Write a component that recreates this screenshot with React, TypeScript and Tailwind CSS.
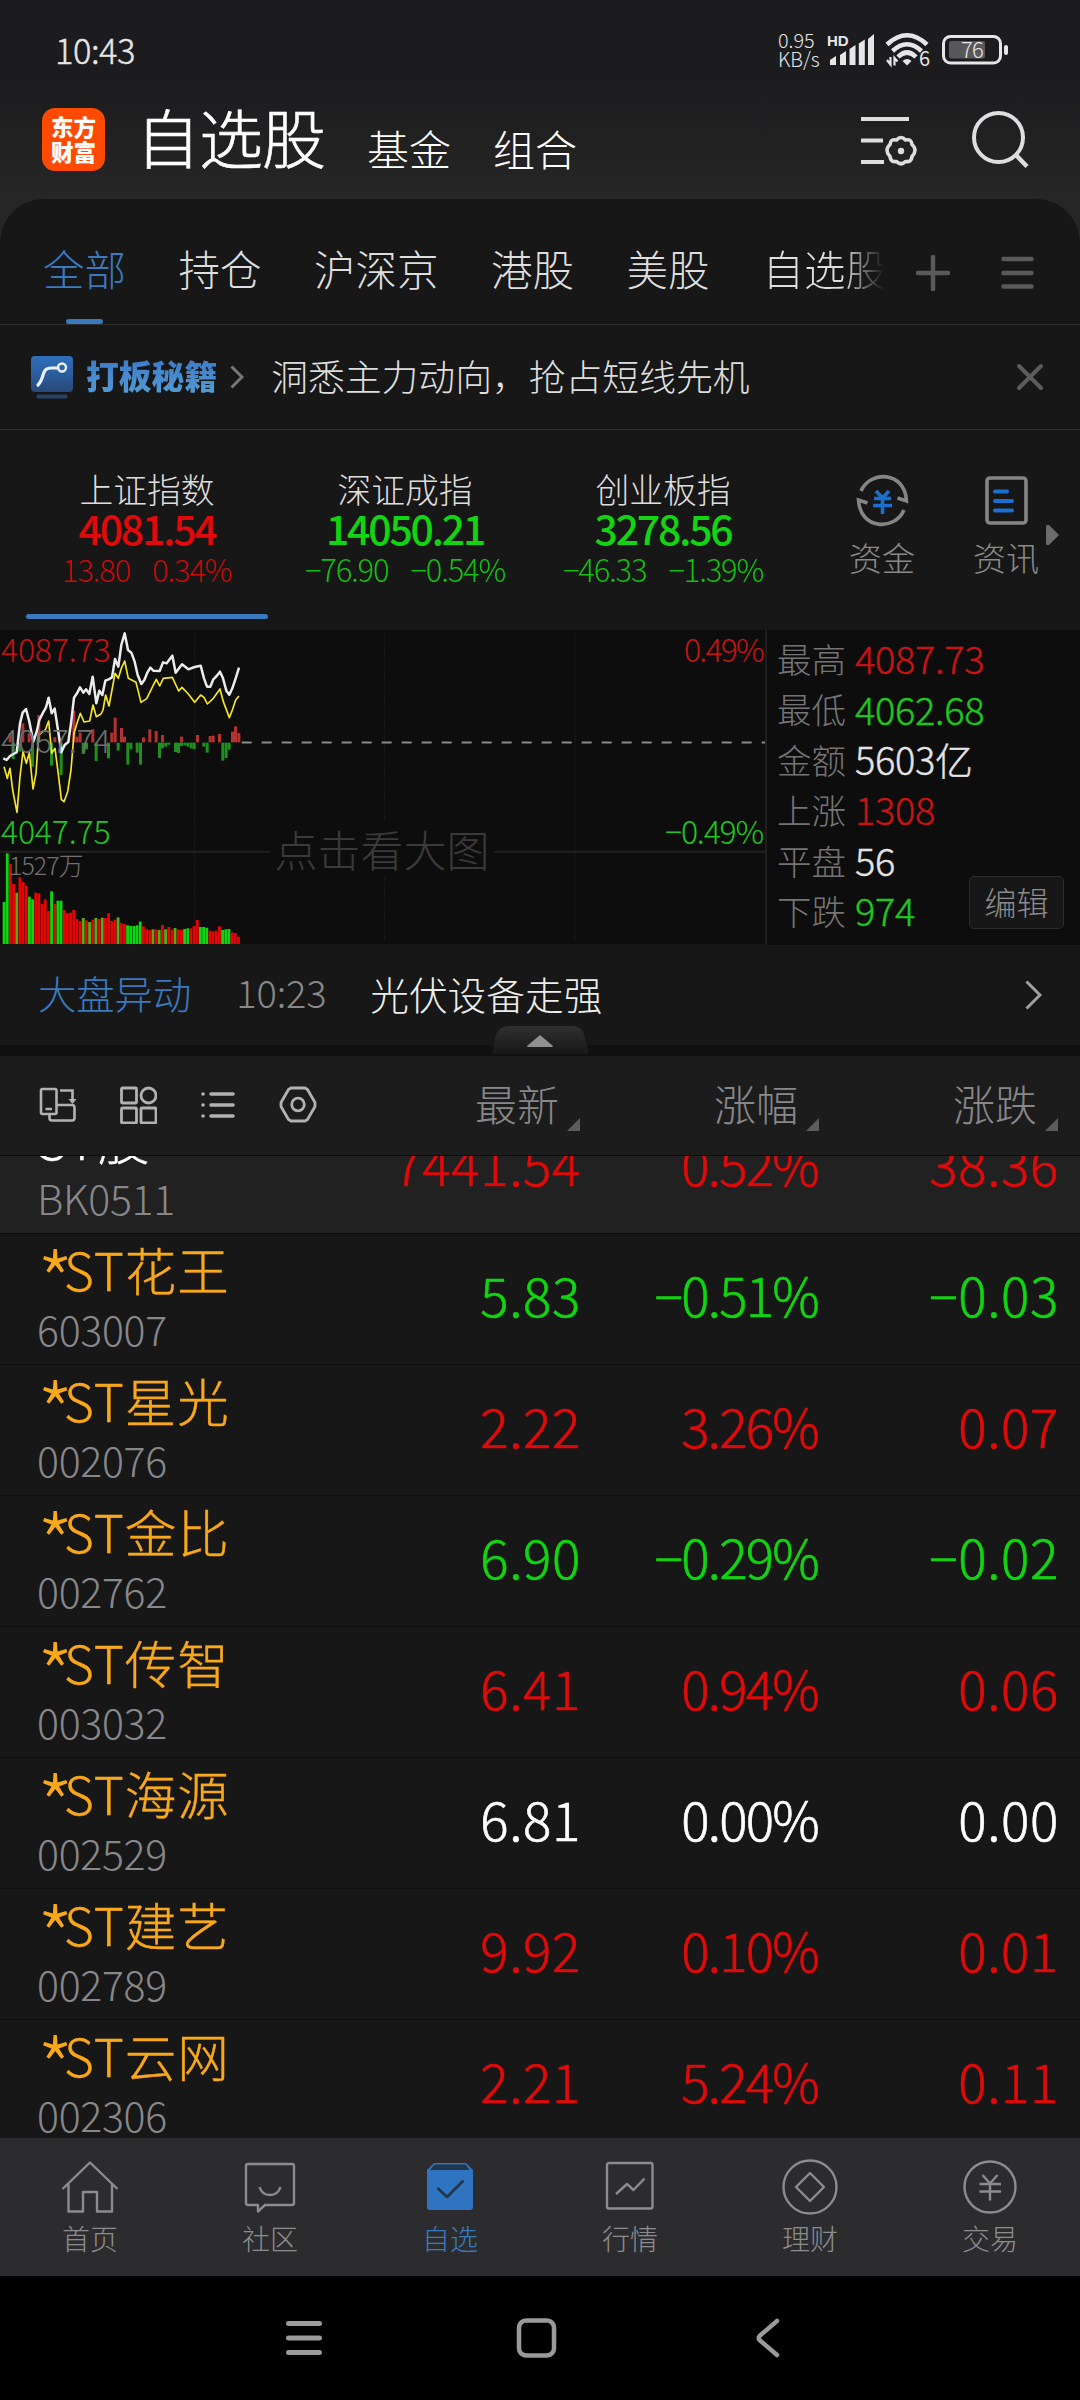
import { ReactNode } from "react";
import clsx from "clsx";

type Trend = "up" | "down" | "flat";

const trendColor: Record<Trend, string> = {
  up: "text-[#e00a0a]",
  down: "text-[#12d412]",
  flat: "text-white",
};

const tabs = ["持仓", "沪深京", "港股", "美股"];

const indices: { name: string; value: string; change: string; percent: string; trend: Trend }[] = [
  { name: "上证指数", value: "4081.54", change: "13.80", percent: "0.34%", trend: "up" },
  { name: "深证成指", value: "14050.21", change: "−76.90", percent: "−0.54%", trend: "down" },
  { name: "创业板指", value: "3278.56", change: "−46.33", percent: "−1.39%", trend: "down" },
];

const summary: { label: string; value: string; trend: Trend }[] = [
  { label: "最高", value: "4087.73", trend: "up" },
  { label: "最低", value: "4062.68", trend: "down" },
  { label: "金额", value: "5603亿", trend: "flat" },
  { label: "上涨", value: "1308", trend: "up" },
  { label: "平盘", value: "56", trend: "flat" },
  { label: "下跌", value: "974", trend: "down" },
];

type Stock = { name: string; code: string; price: string; percent: string; change: string; trend: Trend; starred?: boolean };

const board: Stock = { name: "ST股", code: "BK0511", price: "7441.54", percent: "0.52%", change: "38.36", trend: "up" };

const stocks: Stock[] = [
  { name: "ST花王", code: "603007", price: "5.83", percent: "−0.51%", change: "−0.03", trend: "down", starred: true },
  { name: "ST星光", code: "002076", price: "2.22", percent: "3.26%", change: "0.07", trend: "up", starred: true },
  { name: "ST金比", code: "002762", price: "6.90", percent: "−0.29%", change: "−0.02", trend: "down", starred: true },
  { name: "ST传智", code: "003032", price: "6.41", percent: "0.94%", change: "0.06", trend: "up", starred: true },
  { name: "ST海源", code: "002529", price: "6.81", percent: "0.00%", change: "0.00", trend: "flat", starred: true },
  { name: "ST建艺", code: "002789", price: "9.92", percent: "0.10%", change: "0.01", trend: "up", starred: true },
  { name: "ST云网", code: "002306", price: "2.21", percent: "5.24%", change: "0.11", trend: "up", starred: true },
];

// Intraday chart, all in thirds of a pixel
const priceLine =
  "10,415 20,420 30,408 40,402 50,397 60,310 68,278 78,267 88,305 100,365 110,335 118,300 128,280 138,262 146,233 155,280 164,266 174,330 184,397 194,375 205,366 213,310 222,233 231,220 240,202 250,218 258,208 268,222 278,170 289,250 298,212 307,225 316,182 326,178 336,172 345,117 355,140 364,75 374,40 384,90 394,98 404,125 413,165 424,192 433,180 442,158 451,143 460,152 479,153 489,127 500,130 517,107 527,158 546,133 565,148 584,141 602,137 612,175 621,200 631,200 640,178 650,168 660,155 669,175 679,212 688,224 697,205 707,175 717,143";
const averageLine =
  "12,440 22,475 30,445 38,510 51,577 60,470 69,395 79,430 88,398 99,507 108,460 116,345 126,337 136,330 146,303 155,400 165,385 174,455 184,538 192,545 203,515 213,450 222,340 231,310 241,280 252,306 269,303 279,255 289,290 303,282 309,270 317,225 327,258 336,210 345,160 355,175 364,145 374,123 385,175 408,187 415,215 423,247 440,236 452,212 460,195 469,178 479,198 490,175 517,172 536,213 546,202 565,222 584,247 602,225 612,232 622,252 640,235 660,207 670,245 688,293 697,270 707,240 717,228";
const upTicks = [
  [31, 340], [69, 310], [88, 340], [117, 285], [165, 352], [222, 272], [232, 350], [241, 338], [279, 328], [336, 338],
  [346, 293], [365, 324], [374, 350], [431, 352], [450, 328], [469, 333], [488, 345], [545, 350], [593, 345], [631, 348],
  [640, 347], [659, 342], [698, 335], [707, 319], [717, 339],
];
const downTicks = [
  [40, 417], [60, 395], [98, 440], [155, 437], [184, 465], [250, 402], [260, 388], [289, 423], [326, 415], [355, 392],
  [384, 434], [393, 388], [412, 398], [422, 434], [479, 414], [488, 385], [498, 380], [507, 374], [527, 396], [536, 399],
  [545, 378], [555, 376], [564, 380], [574, 385], [583, 388], [612, 380], [622, 398], [669, 422], [679, 414], [688, 389],
];
const volume =
  "g846 g700 r732 r792 m818 r772 r786 r798 g830 g838 r818 r820 r852 r838 r873 g814 r852 g842 g842 r870 r880 r878 r870 r897 r903 m894 r901 m906 r899 m894 r897 m893 r894 r880 r903 r899 m892 r909 r912 g916 g918 g918 g916 g905 r919 r928 r930 m928 r928 m930 r915 m928 r921 r929 m924 r928 r930 g927 g925 r925 r918 r900 g921 g921 g923 r932 r934 r932 r919 g930 g928 g927 r937 r939 r950"
    .split(" ")
    .map((s) => ({ kind: s[0], top: Number(s.slice(1)) }));
const volumeFill: Record<string, string> = { r: "#e40505", g: "#0fd40f", m: "#57ab18" };

function StatusBar() {
  return (
    <div className="flex h-[100px] items-center justify-between pl-[55px] pr-[72px] text-[#e6e6e6]">
      <span className="-mt-[2px] text-[34.5px] leading-none tracking-[-0.5px] [-webkit-text-stroke:0.4px]">10:43</span>
      <div className="flex items-center">
        <div className="-mt-[2px] flex w-[51px] flex-col whitespace-nowrap text-[19.8px] leading-[19px]">
          <span>0.95</span>
          <span>KB/s</span>
        </div>
        <svg className="h-[34px] w-[48px] overflow-visible" viewBox="0 0 48 34" fill="#e6e6e6">
          <text x="-2" y="13" fontSize="15" fontWeight="700" fontFamily="Liberation Sans">HD</text>
          <path d="M1 32v-5l6-4v9zM11 32V22l6-4v14zM20.500 32V16l6-4v20zM29.800 32V10.500l6-4V32zM39 32V6l6-5v31z" />
        </svg>
        <svg className="ml-[8px] h-[36px] w-[46px] overflow-visible" viewBox="0 0 46 36" fill="none" stroke="#e6e6e6" strokeWidth="4.500">
          <path d="M2 12.500Q22-6 42 12.500M7.500 19Q22 5.500 36.500 19M13 25Q22 16 31 25" />
          <path d="M17.500 29Q22 25 26.500 29L22 33.500z" fill="#e6e6e6" stroke="none" />
          <path d="M2 28l3.500 4.500V25M9.500 33.500V26l3 3.500" strokeWidth="2.200" />
          <text x="34" y="34" fontSize="20" fontWeight="400" fill="#e6e6e6" stroke="none">6</text>
        </svg>
        <svg className="ml-[11px] h-[30px] w-[66px]" viewBox="0 0 66 30">
          <rect x="1.500" y="1.500" width="57" height="26.500" rx="7" fill="none" stroke="#e6e6e6" strokeWidth="3" />
          <rect x="7" y="6" width="36" height="17.500" rx="2" fill="#58585a" />
          <rect x="62" y="10" width="4" height="10" rx="2" fill="#e6e6e6" />
          <text x="30" y="22.500" fontSize="22" fill="#e6e6e6" textAnchor="middle" letterSpacing="-0.800">76</text>
        </svg>
      </div>
    </div>
  );
}

function Header() {
  return (
    <div className="flex h-[99px] items-start pl-[42px] pr-[50px]">
      <div className="mt-[8px] flex h-[63px] w-[63px] flex-col items-center justify-center rounded-[13px] bg-[#ff4a03] pb-[2px] text-[22.5px] font-black leading-[25px] text-white">
        <span>东方</span>
        <span>财富</span>
      </div>
      <span className="ml-[31px] mt-[3px] text-[64px] leading-[64px] tracking-[-1px] text-white [-webkit-text-stroke:0.6px]">自选股</span>
      <span className="ml-[42px] mt-[27px] text-[42px] leading-[42px] text-white">基金</span>
      <span className="ml-[42px] mt-[27px] text-[42px] leading-[42px] text-white">组合</span>
      <svg className="ml-auto mt-[16px] h-[56px] w-[58px]" viewBox="0 0 58 56" fill="none" stroke="#dedede" strokeWidth="4">
        <path d="M0 3h48M0 24.500h22M0 46h23" />
        <path
          d="M35.500 24.500q4.500-5 9 0 6-1.500 6.500 4.500 6 5.500 0 12-.5 6-6.500 5-4.500 4.500-9 0-6 1-6.500-5-6-6.500 0-12 .5-6 6.500-4.500z"
          transform="translate(0 -.5)"
          strokeWidth="3.600"
          strokeLinejoin="round"
        />
        <circle cx="40" cy="35" r="3.200" fill="#dedede" stroke="none" />
      </svg>
      <svg className="ml-[53px] mt-[11px] h-[58px] w-[58px]" viewBox="0 0 58 58" fill="none" stroke="#dedede" strokeWidth="4">
        <circle cx="26.500" cy="26.500" r="24.500" />
        <path d="M43 43l12 12.500" strokeWidth="4.500" />
      </svg>
    </div>
  );
}

function Tabs() {
  return (
    <div className="flex h-[126px] items-start border-b border-[#2e2e2e] pl-[43px] pr-[46px] text-[41.5px] leading-[41px] text-[#dedede]">
      <div className="flex h-[125px] flex-col items-center justify-between pt-[49px] text-[#3a7abf]">
        <span>全部</span>
        <div className="h-[5px] w-[37px] rounded-full bg-[#3a78c0]" />
      </div>
      {tabs.map((tab) => (
        <span key={tab} className="ml-[52.5px] mt-[49px] whitespace-nowrap">{tab}</span>
      ))}
      <span className="ml-[53px] mt-[49px] whitespace-nowrap bg-gradient-to-r from-[#dedede] from-65% to-[#171717] to-98% bg-clip-text text-transparent">
        自选股
      </span>
      <svg className="ml-auto mt-[56px] h-[36px] w-[34px]" viewBox="0 0 34 36" stroke="#5a5a5a" strokeWidth="4.500" strokeLinecap="round">
        <path d="M2 18h30M17 2v32" />
      </svg>
      <svg className="ml-[51px] mt-[56px] h-[36px] w-[33px]" viewBox="0 0 33 36" stroke="#5a5a5a" strokeWidth="4.500" strokeLinecap="round">
        <path d="M2.500 4h28M2.500 18h28M2.500 31.500h28" />
      </svg>
    </div>
  );
}

function Banner() {
  return (
    <div className="flex h-[105px] items-center border-b border-[#2e2e2e] pl-[31px] pr-[36px]">
      <svg className="h-[43px] w-[42px]" viewBox="0 0 42 43">
        <defs>
          <linearGradient id="badge" x1="0" y1="0" x2="0" y2="1">
            <stop offset="0" stopColor="#2f70bd" />
            <stop offset="1" stopColor="#28497a" />
          </linearGradient>
        </defs>
        <rect width="42" height="36" rx="4" fill="url(#badge)" />
        <rect x="5.500" y="38.500" width="31" height="4" rx="1.500" fill="#27436a" />
        <path d="M7 29C14 22 10 12 20 12h7" fill="none" stroke="#e8f0fa" strokeWidth="3.200" strokeLinecap="round" />
        <circle cx="31" cy="11.500" r="4" fill="none" stroke="#e8f0fa" strokeWidth="2.400" />
      </svg>
      <span className="-mt-[5px] ml-[13px] bg-gradient-to-b from-[#3a78c8] to-[#549bd2] bg-clip-text text-[32.8px] font-black leading-[40px] text-transparent">
        打板秘籍
      </span>
      <svg className="ml-[13px] h-[24px] w-[14px]" viewBox="0 0 14 24" fill="none" stroke="#77777a" strokeWidth="3">
        <path d="M1.500 1.500L12 12 1.500 22.500" />
      </svg>
      <span className="-mt-[4px] ml-[27px] text-[36.8px] leading-[40px] text-[#dedede]">洞悉主力动向，抢占短线先机</span>
      <svg className="ml-auto h-[28px] w-[28px]" viewBox="0 0 28 28" stroke="#5c5c5c" strokeWidth="4" strokeLinecap="round">
        <path d="M3 3l22 22M25 3L3 25" />
      </svg>
    </div>
  );
}

function IndexStrip() {
  return (
    <div className="relative flex h-[200px] pl-[18px]">
      {indices.map((item, i) => (
        <div key={item.name} className="flex w-[258px] flex-col items-center pt-[40px]">
          <span className="text-[33.8px] leading-[38px] text-[#dedede]">{item.name}</span>
          <span className={clsx("-mt-[1px] text-[41px] font-medium leading-[40px] tracking-[-2.2px]", trendColor[item.trend])}>
            {item.value}
          </span>
          <div className={clsx("mt-[5px] flex gap-[22px] text-[31px] leading-[34px] tracking-[-1.2px] opacity-90", trendColor[item.trend])}>
            <span>{item.change}</span>
            <span>{item.percent}</span>
          </div>
          {i === 0 && <div className="mt-[28px] h-[5px] w-[242px] rounded-full bg-[#3a78c0]" />}
        </div>
      ))}
      <div className="ml-[57px] flex flex-col items-center pt-[44px] text-[#8a8a8a]">
        <svg className="h-[53px] w-[53px]" viewBox="0 0 53 53" fill="none" stroke="#858585" strokeWidth="3.600">
          <path d="M5 17C14-4 49-3 50.500 27l-9-3M48 36C39 57 4 56 2.500 26l9 3" />
          <path d="M20 17l6.500 7 6.500-7M18 24.500h17M17 31.500h19M26.500 24v16" stroke="#1b6fd0" />
        </svg>
        <span className="mt-[12px] text-[33px] leading-[36px]">资金</span>
      </div>
      <div className="ml-[58px] flex flex-col items-center pt-[46px] text-[#8a8a8a]">
        <svg className="h-[50px] w-[43px]" viewBox="0 0 43 50" fill="none" stroke="#858585" strokeWidth="3.600">
          <rect x="2" y="2" width="39" height="45" rx="3" />
          <path d="M10 15.500h12M10 25h17M10 34.500h17" stroke="#1b6fd0" strokeWidth="4" strokeLinecap="round" />
        </svg>
        <span className="mt-[13px] text-[33px] leading-[36px]">资讯</span>
      </div>
      <svg className="absolute left-[1046px] top-[94px] h-[22px] w-[13px]" viewBox="0 0 13 22" fill="#6b6b6b">
        <path d="M0 3Q0 0 3 1l10 10L3 21q-3 1-3-2z" />
      </svg>
    </div>
  );
}

function IntradayChart() {
  return (
    <div className="relative h-[314px] w-[765px] bg-[#0d0d0d]">
      <svg className="block h-[314px] w-[765px]" viewBox="0 30 2295 942" fill="none">
        <g stroke="#262626" strokeWidth="3" strokeDasharray="4 5">
          <path d="M584 40V966M1154 40V966M1725 40V966" />
        </g>
        <path d="M0 695H2295" stroke="#222222" strokeWidth="6" />
        <path d="M725 367.500H2295" stroke="#8a8a8a" strokeWidth="6" strokeDasharray="30 30" />
        {upTicks.map(([x, y]) => (
          <rect key={x} x={x - 5} y={y} width="9" height={367 - y} fill="#b43232" />
        ))}
        {downTicks.map(([x, y]) => (
          <rect key={x} x={x - 5} y={368} width="9" height={y - 368} fill="#1f8f1f" />
        ))}
        {volume.map((bar, i) => (
          <rect key={i} x={8 + i * 9.5} y={bar.top} width="8.500" height={972 - bar.top} fill={volumeFill[bar.kind]} />
        ))}
        <polyline points={averageLine} stroke="#f5e52a" strokeWidth="5" strokeLinejoin="round" />
        <polyline points={priceLine} stroke="#ebebeb" strokeWidth="7.500" strokeLinejoin="round" />
      </svg>
      <div className="absolute left-[1px] top-px text-[32px] leading-[34px] tracking-[-0.2px] text-[#c81414]">4087.73</div>
      <div className="absolute left-[1px] top-[92px] text-[32px] leading-[34px] tracking-[-0.2px] text-[#707070]">4067.74</div>
      <div className="absolute left-[1px] top-[183px] text-[32px] leading-[34px] tracking-[-0.2px] text-[#1ec81e]">4047.75</div>
      <div className="absolute left-[9px] top-[220px] text-[25px] leading-[28px] tracking-[-1px] text-[#707070]">1527万</div>
      <div className="absolute right-[2px] top-px text-[32px] leading-[34px] tracking-[-1.8px] text-[#c81414]">0.49%</div>
      <div className="absolute right-[2px] top-[183px] text-[32px] leading-[34px] tracking-[-1.2px] text-[#1ec81e]">−0.49%</div>
      <div className="absolute left-[270px] top-[191px] w-[224px] bg-[#0d0d0d] text-center text-[43px] leading-[54px] text-[#3a3a3a]">
        点击看大图
      </div>
    </div>
  );
}

function MarketPanel() {
  return (
    <div className="flex h-[315px] bg-[#171717]">
      <IntradayChart />
      <div className="relative flex-1 border-l-2 border-[#1e1e1e] bg-[#0d0d0d] pl-[10px] pt-[3px]">
        {summary.map((row) => (
          <div key={row.label} className="flex h-[50.4px] items-center">
            <span className="w-[78px] text-[34.5px] leading-none text-[#757575]">{row.label}</span>
            <span
              className={clsx(
                "text-[38px] leading-none tracking-[-0.3px] [-webkit-text-stroke:0.4px]",
                row.trend === "up" && "text-[#c81414]",
                row.trend === "down" && "text-[#1ec81e]",
                row.trend === "flat" && "text-[#e4e4e4]"
              )}
            >
              {row.value}
            </span>
          </div>
        ))}
        <div className="absolute left-[202px] top-[246px] flex h-[53px] w-[95px] items-center justify-center rounded-[5px] border border-[#2c2c2c] bg-[#171717] pb-[4px] text-[32px] leading-none text-[#8c8c8c]">
          编辑
        </div>
      </div>
    </div>
  );
}

function NewsRow() {
  return (
    <div className="relative h-[111px] border-b-[11px] border-[#101010]">
      <div className="flex h-[100px] items-center pb-[4px] pl-[38px] pr-[38px]">
        <span className="text-[38.3px] leading-none text-[#3a7abf]">大盘异动</span>
        <span className="-mt-[2px] ml-[45px] w-[134px] text-[38px] leading-none tracking-[-0.1px] text-[#88888b]">10:23</span>
        <span className="text-[38.7px] leading-none text-[#ededed]">光伏设备走强</span>
        <svg className="ml-auto mt-[4px] h-[30px] w-[17px]" viewBox="0 0 17 30" fill="none" stroke="#a0a0a0" strokeWidth="3">
          <path d="M1.500 1.500L15 15 1.500 28.500" />
        </svg>
      </div>
      <svg className="absolute left-[492px] top-[81px] h-[28px] w-[97px]" viewBox="0 0 97 28">
        <defs>
          <linearGradient id="handle" x1="0" y1="0" x2="0" y2="1">
            <stop offset="0" stopColor="#303030" />
            <stop offset="1" stopColor="#171717" />
          </linearGradient>
        </defs>
        <path d="M0 28L3 12Q6 0 17 0H80Q91 0 93 12L97 28z" fill="url(#handle)" />
        <path d="M35 20L48 9 61 20q0 1-1 1H36q-1 0-1-1z" fill="#909090" />
      </svg>
    </div>
  );
}

function ColumnLabel({ children }: { children: ReactNode }) {
  return (
    <div className="flex w-[239px] items-end justify-end">
      <span className="mb-[4px] text-[42px] leading-[48px] text-[#88888b]">{children}</span>
      <svg className="ml-[8px] h-[13px] w-[13px]" viewBox="0 0 13 13" fill="#5c5c5e">
        <path d="M13 0v13H0z" />
      </svg>
    </div>
  );
}

function ListHeader() {
  return (
    <div className="flex h-[100px] items-center border-b border-[#0c0c0c] bg-[#1c1c1c] pb-[2px] pl-[39px] pr-[22px]">
      <div className="flex items-center gap-[43px]">
        <svg className="h-[37px] w-[38px]" viewBox="0 0 38 37" fill="none" stroke="#b2b2b2" strokeWidth="2.600">
          <rect x="2" y="3" width="15.500" height="25" rx="1.500" />
          <path d="M17.500 19H33q2.500 0 2.500 2.500V32q0 2.500-2.500 2.500H13Q10.500 34.500 10.500 32V28M6.500 23h6.500M21 4.500h12.500V14" />
          <path d="M29.500 13h8l-4 5z" fill="#b2b2b2" stroke="none" />
        </svg>
        <svg className="h-[38px] w-[37px]" viewBox="0 0 37 38" fill="none" stroke="#b2b2b2" strokeWidth="2.800">
          <rect x="1.500" y="2" width="15" height="15" rx="1" />
          <circle cx="28.500" cy="9.500" r="7.500" />
          <rect x="1.500" y="22" width="15" height="15" rx="1" />
          <rect x="21" y="22" width="15" height="15" rx="1" />
        </svg>
        <svg className="h-[30px] w-[36px]" viewBox="0 0 36 30" fill="none" stroke="#b2b2b2" strokeWidth="3.600" strokeLinecap="round">
          <path d="M11 4h22M11 15h22M11 26h22M3 4h.1M3 15h.1M3 26h.1" />
        </svg>
        <svg className="h-[37px] w-[38px]" viewBox="0 0 38 37" fill="none" stroke="#b2b2b2" strokeWidth="2.800" strokeLinejoin="round">
          <path d="M12 2H26L28.500 3.500 36 16.500v4L28.500 33.500 26 35H12L9.500 33.500 2 20.500v-4L9.500 3.500z" />
          <circle cx="19" cy="18.500" r="6.300" />
        </svg>
      </div>
      <div className="ml-auto flex">
        <ColumnLabel>最新</ColumnLabel>
        <ColumnLabel>涨幅</ColumnLabel>
        <ColumnLabel>涨跌</ColumnLabel>
      </div>
    </div>
  );
}

function StockRow({ stock }: { stock: Stock }) {
  return (
    <div className={clsx("flex h-[131px] shrink-0 border-b border-[#0e0e0e] pl-[37px] pr-[20px]", stock.starred ? "bg-[#171717]" : "bg-[#212121]")}>
      <div className="flex w-[263px] flex-col pt-[8px]">
        <span
          className={clsx(
            "flex text-[51.5px] leading-[54px] tracking-[1px] whitespace-nowrap [-webkit-text-stroke:0.4px]",
            stock.starred ? "text-[#f9a81b]" : "text-white"
          )}
        >
          {stock.starred && <span className="w-[27px] origin-[0_11px] scale-160 [-webkit-text-stroke:0px]">*</span>}
          <span>{stock.name}</span>
        </span>
        <span className="mt-[9px] text-[41px] leading-[46px] tracking-[-0.3px] text-[#88888b]">{stock.code}</span>
      </div>
      <div className={clsx("flex flex-1 pt-[32px] text-right text-[53px] leading-[56px] [-webkit-text-stroke:0.6px]", trendColor[stock.trend])}>
        <span className="w-[281px] tracking-[0.6px]">{stock.price}</span>
        <span className="w-[237px] tracking-[-1.8px]">{stock.percent}</span>
        <span className="w-[241px] tracking-[0.6px]">{stock.change}</span>
      </div>
    </div>
  );
}

function StockList() {
  return (
    <div className="h-[982px] overflow-hidden">
      <div className="-mt-[53px] flex flex-col">
        <StockRow stock={board} />
        {stocks.map((stock) => (
          <StockRow key={stock.code} stock={stock} />
        ))}
      </div>
    </div>
  );
}

function NavItem({ label, active, children }: { label: string; active?: boolean; children: ReactNode }) {
  return (
    <div className={clsx("flex w-[180px] flex-col items-center pt-[20px]", active ? "text-[#3a7abf]" : "text-[#8c8c8f]")}>
      <svg className="h-[58px] w-[58px]" viewBox="0 0 58 58" fill="none" stroke="currentColor" strokeWidth="2.400" strokeLinejoin="round">
        {children}
      </svg>
      <span className="mt-[6px] text-[28px] leading-[32px]">{label}</span>
    </div>
  );
}

function BottomNav() {
  return (
    <nav className="flex h-[138px] bg-[#2c2c2e]">
      <NavItem label="首页">
        <path d="M1.500 31L29 4.500 56.500 31M7.500 26v27.500H22V34H36V53.500H51V26" />
      </NavItem>
      <NavItem label="社区">
        <path d="M8 6H51q2 0 2 2V45q0 2-2 2H24l-7 6.500V47H7q-2 0-2-2V8q0-2 2-2z" />
        <path d="M18.500 29Q21 37 29 37t10.500-8" />
      </NavItem>
      <NavItem label="自选" active>
        <path d="M13 5H45L52 12V49q0 3-3 3H9q-3 0-3-3V12z" fill="#2f74c0" stroke="none" />
        <path d="M13.500 6.500H44.500L48.500 12H9z" fill="#24364c" stroke="none" />
        <path d="M16.500 30l9.500 9L42.500 22.500" stroke="#24364c" strokeWidth="2.800" />
      </NavItem>
      <NavItem label="行情">
        <rect x="6" y="5" width="45.500" height="45.500" rx="2" />
        <path d="M15 36L26 26l6.500 6L43.500 20.500" />
      </NavItem>
      <NavItem label="理财">
        <circle cx="29" cy="29" r="26.500" />
        <path d="M29 15L43 29 29 43 15 29z" />
      </NavItem>
      <NavItem label="交易">
        <circle cx="29" cy="29" r="25.500" />
        <path d="M21.500 17L29 25.500 36.500 17M18.500 26H40M18.500 33.500H40M29 25.500V42.500" />
      </NavItem>
    </nav>
  );
}

function SystemBar() {
  return (
    <div className="flex h-[124px] items-start bg-black pt-[41px]">
      <svg className="ml-[285px] h-[42px] w-[38px]" viewBox="0 0 38 42" stroke="#9a9a9a" strokeWidth="5" strokeLinecap="round">
        <path d="M3.500 6.500h31M3.500 21h31M3.500 35.500h31" />
      </svg>
      <svg className="ml-[193px] h-[42px] w-[42px]" viewBox="0 0 42 42" fill="none" stroke="#9a9a9a" strokeWidth="4.500">
        <rect x="3" y="3.500" width="35" height="35" rx="7" />
      </svg>
      <svg className="ml-[198px] h-[42px] w-[28px]" viewBox="0 0 28 42" fill="none" stroke="#9a9a9a" strokeWidth="4.500" strokeLinecap="round" strokeLinejoin="round">
        <path d="M21 4L3.500 19q-1.500 2 0 4L21 38" />
      </svg>
    </div>
  );
}

export default function App() {
  return (
    <div className="flex h-[2400px] w-[1080px] flex-col overflow-hidden bg-[#262626] font-['Noto_Sans_CJK_SC','Noto_Sans',sans-serif] font-light">
      <div className="bg-gradient-to-b from-[#1c1c1e] from-40% to-[#262626]">
        <StatusBar />
        <Header />
      </div>
      <div className="rounded-t-[44px] bg-[#171717]">
        <Tabs />
        <Banner />
        <IndexStrip />
        <MarketPanel />
        <NewsRow />
        <ListHeader />
        <StockList />
      </div>
      <BottomNav />
      <SystemBar />
    </div>
  );
}
